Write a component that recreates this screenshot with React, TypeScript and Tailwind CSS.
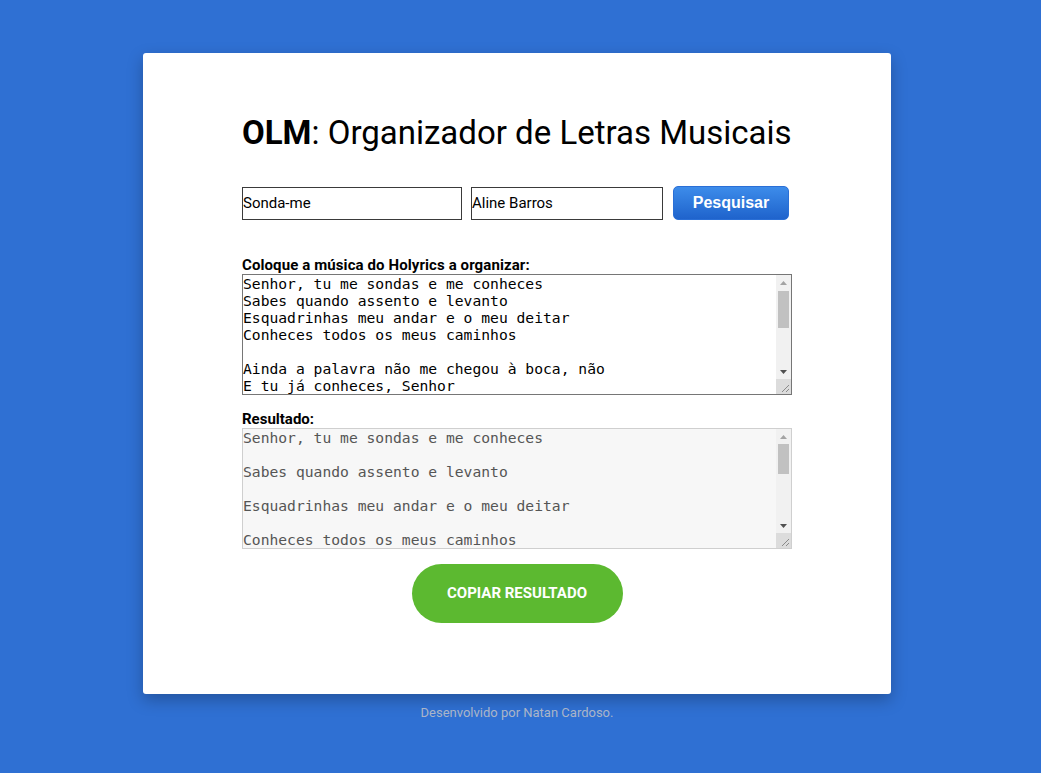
import React from "react";

const lyrics = `Senhor, tu me sondas e me conheces
Sabes quando assento e levanto
Esquadrinhas meu andar e o meu deitar
Conheces todos os meus caminhos

Ainda a palavra não me chegou à boca, não
E tu já conheces, Senhor
Tu me cercaste em volta
E puseste sobre mim a Tua mão

Tal conhecimento é maravilhoso demais
Elevado é, não o posso atingir
Para onde me irei do Teu Espírito?
Para onde fugirei da Tua face?`;

const result = lyrics
  .split("\n")
  .filter((l) => l.trim() !== "")
  .join("\n\n");

function FakeScrollbar({ thumbTop, thumbHeight }: { thumbTop: number; thumbHeight: number }) {
  return (
    <div className="flex w-[15px] flex-col bg-[#f1f1f1]">
      <div className="flex h-[15px] items-center justify-center">
        <svg width="7" height="4" viewBox="0 0 7 4">
          <polygon points="0,4 3.5,0 7,4" fill="#a3a3a3" />
        </svg>
      </div>
      <div className="relative flex-1">
        <div
          className="absolute left-[2px] right-[2px] bg-[#c1c1c1]"
          style={{ top: thumbTop, height: thumbHeight }}
        />
      </div>
      <div className="flex h-[15px] items-center justify-center">
        <svg width="7" height="4" viewBox="0 0 7 4">
          <polygon points="0,0 3.5,4 7,0" fill="#505050" />
        </svg>
      </div>
      <div className="flex h-[15px] items-end justify-end bg-[#dcdcdc]">
        <svg width="15" height="15" viewBox="0 0 15 15">
          <line x1="13" y1="6" x2="6" y2="13" stroke="#8a8a8a" strokeWidth="1" />
          <line x1="13" y1="10" x2="10" y2="13" stroke="#8a8a8a" strokeWidth="1" />
        </svg>
      </div>
    </div>
  );
}

export default function App() {
  return (
    <div
      className="min-h-[773px] w-full bg-[#2f70d3] pt-[53px]"
      style={{ fontFamily: "Roboto, 'Liberation Sans', sans-serif" }}
    >
      <div className="ml-[143px] w-[748px]">
        <div className="rounded-[3px] bg-white pl-[99px] pr-[99px] pt-[61px] pb-[71px] shadow-[0_6px_16px_rgba(0,0,0,0.25)]">
          <h1 className="text-[33px] leading-[38px] text-black font-normal whitespace-nowrap">
            <span className="font-bold">OLM</span>: Organizador de Letras Musicais
          </h1>

          <div className="mt-[34px] flex items-center">
            <input
              defaultValue="Sonda-me"
              className="h-[33px] w-[220px] border border-[#3a3a3a] bg-white px-0 text-[15px] text-black outline-none"
              style={{ fontFamily: "Roboto, sans-serif" }}
            />
            <input
              defaultValue="Aline Barros"
              className="ml-[9px] h-[33px] w-[192px] border border-[#3a3a3a] bg-white px-0 text-[15px] text-black outline-none"
              style={{ fontFamily: "Roboto, sans-serif" }}
            />
            <button
              className="ml-[10px] h-[34px] w-[116px] rounded-[5px] border border-[#2a6fd6] bg-gradient-to-b from-[#3d8cea] to-[#1f63cc] text-[16px] font-bold text-white"
              style={{ fontFamily: "'Liberation Sans', Arial, sans-serif" }}
            >
              Pesquisar
            </button>
          </div>

          <div className="mt-[36px] text-[15px] leading-[18px] font-bold text-black tracking-[0.1px]">
            Coloque a música do Holyrics a organizar:
          </div>
          <div className="flex h-[121px] w-[550px] border border-[#767676] bg-white">
            <textarea
              defaultValue={lyrics}
              className="block h-full flex-1 resize-none overflow-hidden border-0 bg-white p-0 text-[14.67px] leading-[17px] text-black outline-none"
              style={{ fontFamily: "'DejaVu Sans Mono', monospace" }}
            />
            <FakeScrollbar thumbTop={1} thumbHeight={37} />
          </div>

          <div className="mt-[15px] text-[15px] leading-[18px] font-bold text-black">
            Resultado:
          </div>
          <div className="flex h-[121px] w-[550px] border border-[#cfcfcf] bg-[#f7f7f7]">
            <textarea
              readOnly
              defaultValue={result}
              className="block h-full flex-1 resize-none overflow-hidden border-0 bg-[#f7f7f7] p-0 text-[14.67px] leading-[17px] text-[#555555] outline-none"
              style={{ fontFamily: "'DejaVu Sans Mono', monospace" }}
            />
            <FakeScrollbar thumbTop={0} thumbHeight={30} />
          </div>

          <div className="mt-[15px] flex justify-center">
            <button className="h-[59px] w-[211px] rounded-full bg-[#5cb930] text-[15px] font-bold text-white">
              COPIAR RESULTADO
            </button>
          </div>
        </div>
        <div className="mt-[11px] text-center text-[13px] leading-[15px] text-[#aab5c8]">
          Desenvolvido por Natan Cardoso.
        </div>
      </div>
    </div>
  );
}
